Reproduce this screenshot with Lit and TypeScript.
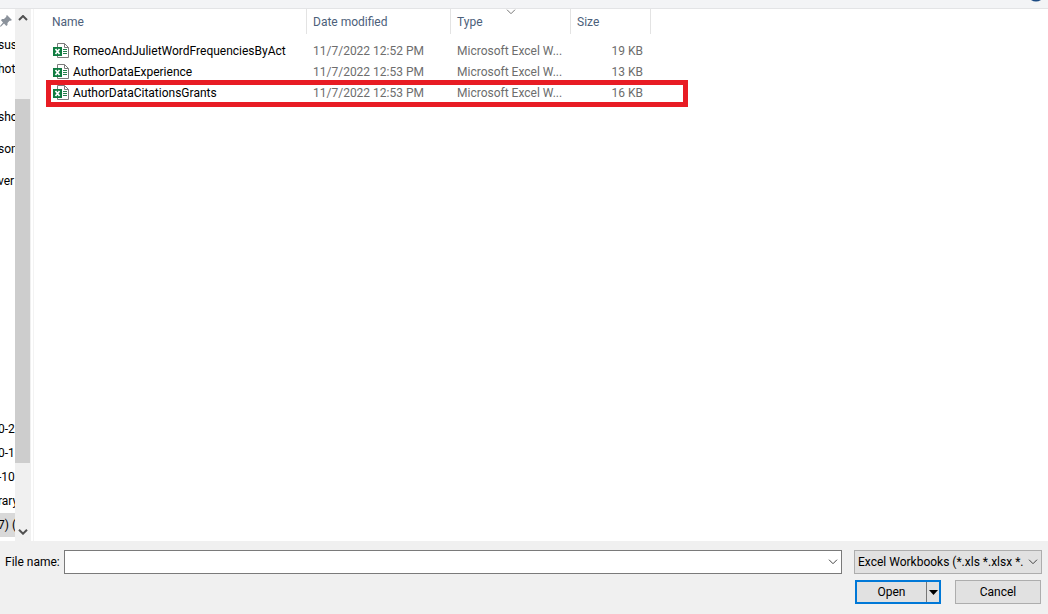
import { LitElement, html, css, svg } from "lit";
import { customElement, state } from "lit/decorators.js";
import { classMap } from "lit/directives/class-map.js";

interface FileRow {
  name: string;
  modified: string;
  type: string;
  size: string;
  marked?: boolean;
}

const FILES: FileRow[] = [
  { name: "RomeoAndJulietWordFrequenciesByAct", modified: "11/7/2022 12:52 PM", type: "Microsoft Excel W...", size: "19 KB" },
  { name: "AuthorDataExperience", modified: "11/7/2022 12:53 PM", type: "Microsoft Excel W...", size: "13 KB" },
  { name: "AuthorDataCitationsGrants", modified: "11/7/2022 12:53 PM", type: "Microsoft Excel W...", size: "16 KB", marked: true },
];

const PINNED = ["sus", "hot", "", "sho"];
const FOLDERS = ["son", "ver"];
const DRIVES = ["0-2", "0-1", "-10", "rary", "7) ("];

const chevron = (points: string, cls: string) => html`
  <svg class=${cls} viewBox="0 0 10 6" width="10" height="6" aria-hidden="true">
    ${svg`<polyline points=${points} fill="none" stroke="currentColor" />`}
  </svg>
`;
const DOWN = "1,0.7 5,4.7 9,0.7";
const UP = "1,5 5,1 9,5";

@customElement("file-icon")
class FileIcon extends LitElement {
  static styles = css`
    :host { display: block; width: 16px; height: 16px; flex: none; }
    svg { display: block; }
  `;
  render() {
    return html`
      <svg width="16" height="16" viewBox="0 0 16 16" aria-hidden="true">
        <path d="M4.5 .5h7l4 4v10h-11z" fill="#fff" stroke="#7b7b7b" />
        <path d="M11.5 .5v4h4" fill="none" stroke="#7b7b7b" />
        <path d="M10 6.5h4M10 8.5h4M10 10.5h4" stroke="#21804a" />
        <path d="M0 4h9v9H0z" fill="#107c41" />
        <path d="M2.500 6l4 5M6.500 6l-4 5" stroke="#fff" stroke-width="1.700" />
      </svg>
    `;
  }
}

@customElement("app-root")
class AppRoot extends LitElement {
  static styles = css`
    :host {
      display: flex;
      flex-direction: column;
      height: 100vh;
      overflow: hidden;
      background: #fff;
      color: #000;
      font: 12px/16px "Segoe UI", Roboto, "Open Sans", sans-serif;
    }
    * { box-sizing: border-box; }
    button, input, select { font: inherit; color: inherit; margin: 0; border-radius: 0; }
    svg { display: block; }

    .toolbar {
      flex: none;
      display: flex;
      justify-content: flex-end;
      height: 9px;
      padding-right: 7px;
      background: #f3f4f6;
      border-bottom: 1px solid #e3e4e6;
    }

    .body { flex: 1; display: flex; min-height: 0; }
    .tree {
      width: 15px;
      display: flex;
      flex-direction: column;
      overflow: hidden;
      padding: 4px 0;
    }
    .pin { margin-top: 2px; flex: none; }
    .tree ul { list-style: none; margin: 0; padding: 0; }
    .tree li { height: 24px; width: 15px; overflow: hidden; line-height: 24px; white-space: nowrap; text-indent: -2px; }
    .pinned, .folders, .drives { flex: none; }
    .tree .pinned { margin-top: 6px; }
    .tree .folders { margin-top: 8px; display: grid; row-gap: 8px; }
    .tree .drives { margin-top: auto; }
    .selected { background: #d9d9d9; }

    .scroll {
      width: 16px;
      display: flex;
      flex-direction: column;
      align-items: center;
      justify-content: space-between;
      background: #f0f0f0;
      color: #505050;
      padding: 6px 0;
    }
    .scroll polyline { stroke-width: 2; }
    .track { flex: 1; width: 100%; display: flex; flex-direction: column; padding: 0 1px 0 0; }
    .before { flex: 78; }
    .thumb { flex: 364; background: #cdcdcd; }
    .after { flex: 66; }

    .files { flex: 1; margin-left: 2px; padding-left: 12px; border-left: 1px solid #f3f3f3; min-width: 0; overflow: hidden; }
    table { width: 605px; table-layout: fixed; border-collapse: separate; border-spacing: 0; }
    .c-name { width: 261px; }
    .c-date { width: 144px; }
    .c-type { width: 120px; }
    .c-size { width: 80px; }
    th {
      position: relative;
      height: 25px;
      padding: 0 6px;
      text-align: left;
      font-weight: 400;
      color: #4c607a;
      border-right: 1px solid #e3e3e3;
    }
    .sort { position: absolute; top: 0; left: calc(50% - 5px); color: #777; }
    tbody::before { content: ""; display: block; height: 6px; }
    td { height: 21px; padding: 0 6px; color: #6d6d6d; white-space: nowrap; }
    td.size { text-align: right; padding-right: 8px; }
    .file { display: flex; align-items: center; gap: 4px; padding-left: 1px; color: #000; }
    tbody tr { position: relative; }
    .frame { position: absolute; inset: -2px -37px -4px 0; border: 5px solid #e81c24; pointer-events: none; }

    .footer {
      flex: none;
      display: grid;
      grid-template-columns: auto 1fr 188px;
      row-gap: 6px;
      padding: 9px 6px 10px 5px;
      background: #f0f0f0;
      align-items: center;
    }
    .combo { position: relative; margin: 0 12px 0 4px; }
    .combo input { display: block; width: 100%; height: 24px; padding: 0 24px 0 4px; border: 1px solid #7a7a7a; background: #fff; outline: none; }
    .filter { position: relative; }
    .filter select {
      display: block;
      width: 100%;
      height: 24px;
      padding: 0 18px 0 3px;
      border: 1px solid #adadad;
      background: #e1e1e1;
      appearance: none;
      outline: none;
      overflow: hidden;
      text-overflow: clip;
    }
    .arrow { position: absolute; right: 4px; top: 9px; color: #444; pointer-events: none; }
    .actions { grid-column: 3; display: grid; grid-template-columns: 1fr 1fr; gap: 14px; padding: 0 1px; }
    .split { display: flex; height: 24px; border: 2px solid #0078d7; background: #e1e1e1; }
    .split button { border: 0; background: none; padding: 0; }
    .split .open { flex: 1; }
    .split .more { width: 13px; display: grid; place-items: center; border-left: 1px solid #777; }
    .cancel { height: 24px; padding: 0; border: 1px solid #adadad; background: #e1e1e1; }
  `;

  @state() private files = FILES;

  render() {
    return html`
      <div class="toolbar">
        <svg width="10" height="2" viewBox="0 0 10 2" aria-hidden="true">
          <path d="M0 0h10Q5 3 0 0z" fill="#1b4a83" />
        </svg>
      </div>

      <div class="body">
        <nav class="tree" aria-label="Folders">
          <svg class="pin" width="12" height="12" viewBox="0 0 12 12" aria-hidden="true">
            <path d="M7 0l5 5-1.500 .8-1 0-2 2.200 0 2-1.200 1L4 8.500 1 11.500 0 11.700 .3 10.700 3 7.500 1 5.200 2 4h2l2.300-2.200V.8z" fill="#8b929b" />
          </svg>
          <ul class="pinned">${PINNED.map((t) => html`<li>${t}</li>`)}</ul>
          <ul class="folders">${FOLDERS.map((t) => html`<li>${t}</li>`)}</ul>
          <ul class="drives">
            ${DRIVES.map((t, i) => html`<li class=${classMap({ selected: i === DRIVES.length - 1 })}>${t}</li>`)}
          </ul>
        </nav>
        <div class="scroll" aria-hidden="true">
          ${chevron(UP, "up")}
          <div class="track">
            <div class="before"></div>
            <div class="thumb"></div>
            <div class="after"></div>
          </div>
          ${chevron(DOWN, "down")}
        </div>

        <main class="files">
          <table>
            <colgroup>
              <col class="c-name" /><col class="c-date" /><col class="c-type" /><col class="c-size" />
            </colgroup>
            <thead>
              <tr>
                <th>Name</th>
                <th>Date modified</th>
                <th>Type${chevron(DOWN, "sort")}</th>
                <th>Size</th>
              </tr>
            </thead>
            <tbody>
              ${this.files.map(
                (f) => html`
                  <tr>
                    <td><div class="file"><file-icon></file-icon>${f.name}</div></td>
                    <td>${f.modified}</td>
                    <td>${f.type}</td>
                    <td class="size">${f.size}${f.marked ? html`<div class="frame"></div>` : ""}</td>
                  </tr>
                `
              )}
            </tbody>
          </table>
        </main>
      </div>

      <form class="footer" @submit=${(e: Event) => e.preventDefault()}>
        <label for="filename">File name:</label>
        <div class="combo">
          <input id="filename" type="text" autocomplete="off" />
          ${chevron(DOWN, "arrow")}
        </div>
        <div class="filter">
          <select aria-label="File type">
            <option>Excel Workbooks (*.xls *.xlsx *.xlsm)</option>
          </select>
          ${chevron(DOWN, "arrow")}
        </div>
        <div class="actions">
          <div class="split">
            <button class="open" type="submit">Open</button>
            <button class="more" type="button" aria-label="Open options">
              <svg width="9" height="5" viewBox="0 0 9 5" aria-hidden="true"><path d="M0 0h9L4.500 5z" /></svg>
            </button>
          </div>
          <button class="cancel" type="button">Cancel</button>
        </div>
      </form>
    `;
  }
}
